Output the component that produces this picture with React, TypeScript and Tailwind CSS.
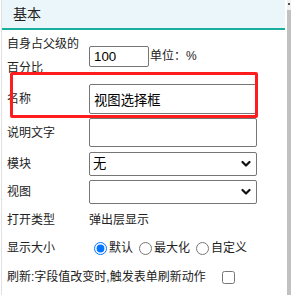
import React from 'react';

const font = "font-['Liberation_Sans','Noto_Sans_CJK_SC',sans-serif]";

function Chevron() {
  return (
    <svg width="10" height="7" viewBox="0 0 10 7" className="absolute right-[6px] top-1/2 -translate-y-1/2 pointer-events-none">
      <path d="M1.5 1.5 L5 5 L8.5 1.5" fill="none" stroke="#111" strokeWidth="2.2" strokeLinecap="round" strokeLinejoin="round" />
    </svg>
  );
}

function Select({ value }: { value: string }) {
  return (
    <div className="relative w-[168px] h-[24px]">
      <select
        defaultValue={value}
        className="appearance-none w-full h-full border border-[#767676] rounded-[2px] bg-white pl-[3px] text-[13.33px] text-black outline-none"
      >
        <option value={value}>{value}</option>
      </select>
      <Chevron />
    </div>
  );
}

export default function App() {
  return (
    <div className={cn(font, 'relative flex w-[291px] h-[295px] bg-white overflow-hidden pl-[1px]')}>
      <div className="w-[284px] border-l border-[#e1e1e1] flex flex-col">
        <div className="h-[30px] bg-[#ebf6fb] border-b-2 border-[#1bae9c] pl-[11px] flex items-center text-[14px] text-[#222] leading-none">
          基本
        </div>

        <div className="flex flex-col pl-[5px] text-[12px] text-[#222]">
          {/* 自身占父级的百分比 */}
          <div className="mt-[2px] flex items-center h-[48px]">
            <div className="w-[82px] leading-[24px]">
              自身占父级的
              <br />
              百分比
            </div>
            <input
              defaultValue="100"
              className="w-[60px] h-[21px] border border-[#767676] rounded-[2px] px-[4px] text-[13.33px] text-black outline-none"
            />
            <span className="ml-[1px]">单位：%</span>
          </div>

          {/* 名称 */}
          <div className="mt-[4px] flex items-center h-[30px]">
            <div className="w-[82px]">名称</div>
            <input
              defaultValue="视图选择框"
              className="w-[168px] h-[30px] border border-[#767676] rounded-[2px] px-[4px] text-[13.33px] text-black outline-none"
            />
          </div>

          {/* 说明文字 */}
          <div className="mt-[4px] flex items-center h-[29px]">
            <div className="w-[82px]">说明文字</div>
            <input className="w-[168px] h-[29px] border border-[#767676] rounded-[2px] px-[4px] text-[13.33px] outline-none" />
          </div>

          {/* 模块 */}
          <div className="mt-[5px] flex items-center h-[24px]">
            <div className="w-[82px]">模块</div>
            <Select value="无" />
          </div>

          {/* 视图 */}
          <div className="mt-[4px] flex items-center h-[24px]">
            <div className="w-[82px]">视图</div>
            <Select value="" />
          </div>

          {/* 打开类型 */}
          <div className="mt-[4px] flex items-center h-[24px]">
            <div className="w-[82px]">打开类型</div>
            <span>弹出层显示</span>
          </div>

          {/* 显示大小 */}
          <div className="mt-[4px] flex items-center h-[24px]">
            <div className="w-[82px]">显示大小</div>
            <div className="flex items-center gap-[1px]">
              {['默认', '最大化', '自定义'].map((label, i) => (
                <label key={label} className="flex items-center">
                  <input
                    type="radio"
                    name="size"
                    defaultChecked={i === 0}
                    className="ml-[5px] mr-[2px] w-[13px] h-[13px]"
                  />
                  {label}
                </label>
              ))}
            </div>
          </div>

          {/* 刷新 */}
          <div className="mt-[5px] flex items-center h-[24px]">
            <span>刷新:字段值改变时,触发表单刷新动作</span>
            <input type="checkbox" className="ml-[16px] w-[13px] h-[13px]" />
          </div>
        </div>
      </div>

      {/* scrollbar */}
      <div className="ml-[2px] flex-1 flex flex-col">
        <div className="h-[10px] bg-[#f1f1f1] flex justify-end">
          <div className="mt-[3px] mr-[1px] w-[2px] h-[2px] bg-[#505050]" />
        </div>
        <div className="flex-1 bg-[#c1c1c1]" />
      </div>

      {/* annotation */}
      <div className="absolute left-[10px] top-[72px] w-[248px] h-[46px] border-[3px] border-[#ff1c1c] rounded-[2px] pointer-events-none" />
    </div>
  );
}

function cn(...c: string[]) {
  return c.join(' ');
}
